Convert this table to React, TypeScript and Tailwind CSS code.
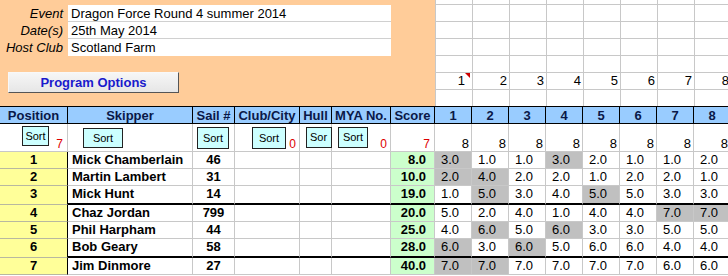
import React from "react";

const GRID = "grid grid-cols-[68px_125px_42px_65px_32px_59px_44px_repeat(8,37px)]";
const RACES = [1, 2, 3, 4, 5, 6, 7, 8];

type Row = {
  pos: number;
  name: string;
  sail: string;
  score: string;
  r: number[];
  gray: number[];
  thick?: boolean;
};

const rows: Row[] = [
  { pos: 1, name: "Mick Chamberlain", sail: "46", score: "8.0", r: [3, 1, 1, 3, 2, 1, 1, 2], gray: [0, 3] },
  { pos: 2, name: "Martin Lambert", sail: "31", score: "10.0", r: [2, 4, 2, 2, 1, 2, 2, 1], gray: [0, 1] },
  { pos: 3, name: "Mick Hunt", sail: "14", score: "19.0", r: [1, 5, 3, 4, 5, 5, 3, 3], gray: [1, 4], thick: true },
  { pos: 4, name: "Chaz Jordan", sail: "799", score: "20.0", r: [5, 2, 4, 1, 4, 4, 7, 7], gray: [6, 7] },
  { pos: 5, name: "Phil Harpham", sail: "44", score: "25.0", r: [4, 6, 5, 6, 3, 3, 5, 5], gray: [1, 3] },
  { pos: 6, name: "Bob Geary", sail: "58", score: "28.0", r: [6, 3, 6, 5, 6, 6, 4, 4], gray: [0, 2], thick: true },
  { pos: 7, name: "Jim Dinmore", sail: "27", score: "40.0", r: [7, 7, 7, 7, 7, 7, 6, 6], gray: [0, 1] },
];

function SortButton({ label = "Sort", className }: { label?: string; className: string }) {
  return (
    <div
      className={`flex items-center justify-center overflow-hidden border border-[#222] bg-[#ccffff] text-[11px] leading-none text-black ${className}`}
    >
      {label}
    </div>
  );
}

function TopInfo() {
  const fields = [
    ["Event", "Dragon Force Round 4 summer 2014"],
    ["Date(s)", "25th May 2014"],
    ["Host Club", "Scotland Farm"],
  ];
  return (
    <div className="w-[435px] shrink-0 bg-[#ffcc99] pt-[5px]">
      {fields.map(([label, value], i) => (
        <div key={label} className="flex h-[17px]">
          <div className="w-[68px] pr-[5px] text-right italic leading-[17px]">{label}</div>
          <div
            className={`w-[323px] bg-white pl-[3px] leading-[17px] ${
              i < 2 ? "border-b border-[#d0d0d0]" : ""
            }`}
          >
            {value}
          </div>
        </div>
      ))}
      <button className="ml-[8px] mt-[16px] flex h-[21px] w-[171px] items-center justify-center border border-t-[#f8f8f8] border-l-[#f8f8f8] border-r-[#555] border-b-[#555] bg-gradient-to-b from-[#f6f6f6] to-[#e6e6e6] text-[13px] font-bold text-[#1a1acc]">
        Program Options
      </button>
    </div>
  );
}

function TopGrid() {
  const heights = ["h-[5px]", "h-[17px]", "h-[17px]", "h-[17px]", "h-[17px]", "h-[17px]", "h-[16px]"];
  return (
    <div className="border-l border-[#c8c8c8]">
      {heights.map((h, ri) => (
        <div key={ri} className={`grid grid-cols-[repeat(8,37px)] ${h}`}>
          {RACES.map((n) => (
            <div
              key={n}
              className={`flex items-center justify-end border-r border-[#c8c8c8] pr-[2px] leading-[16px] ${
                ri < 6 ? "border-b" : ""
              }`}
            >
              {ri === 5 && (
                <>
                  {n}
                  {n === 1 && (
                    <span className="mb-auto h-0 w-0 border-l-[5px] border-t-[5px] border-l-transparent border-t-[#cc0000]" />
                  )}
                </>
              )}
            </div>
          ))}
        </div>
      ))}
    </div>
  );
}

export default function App() {
  const headers = ["Position", "Skipper", "Sail #", "Club/City", "Hull", "MYA No.", "Score"];
  const cell = "border-r border-b border-[#c8c8c8]";
  return (
    <div className="h-[276px] w-[728px] overflow-hidden bg-white font-['Liberation_Sans',Arial,sans-serif] text-[13px] text-black">
      <div className="flex h-[106px]">
        <TopInfo />
        <TopGrid />
      </div>

      {/* Header */}
      <div className={`${GRID} h-[18px]`}>
        {[...headers, ...RACES.map(String)].map((h) => (
          <div
            key={h}
            className="flex items-center justify-center border-t border-b border-r border-black bg-[#99ccff] text-[13px] font-bold leading-none text-[#0a1848]"
          >
            {h}
          </div>
        ))}
      </div>

      {/* Sort row */}
      <div className={`${GRID} h-[28px]`}>
        <div className={`${cell} flex pl-[22px] pt-[2px] pr-[4px]`}>
          <SortButton className="h-[20px] w-[27px]" />
          <span className="ml-auto self-end text-[12px] leading-[14px] text-[#dd0000]">7</span>
        </div>
        <div className={`${cell} pl-[15px] pt-[4px]`}>
          <SortButton className="h-[20px] w-[40px]" />
        </div>
        <div className={`${cell} pl-[4px] pt-[3px]`}>
          <SortButton className="h-[22px] w-[32px]" />
        </div>
        <div className={`${cell} flex pl-[17px] pt-[3px] pr-[3px]`}>
          <SortButton className="h-[22px] w-[34px]" />
          <span className="ml-auto self-end text-[12px] leading-[14px] text-[#dd0000]">0</span>
        </div>
        <div className={`${cell} pl-[6px] pt-[3px]`}>
          <SortButton label="Sor" className="h-[21px] w-[26px] justify-start pl-[3px]" />
        </div>
        <div className={`${cell} flex pl-[6px] pt-[3px] pr-[3px]`}>
          <SortButton className="h-[21px] w-[30px]" />
          <span className="ml-auto self-end text-[12px] leading-[14px] text-[#dd0000]">0</span>
        </div>
        <div className={`${cell} flex items-end justify-end pr-[4px]`}>
          <span className="text-[12px] leading-[14px] text-[#dd0000]">7</span>
        </div>
        {RACES.map((n) => (
          <div key={n} className={`${cell} flex items-end justify-end pr-[2px]`}>
            <span className="leading-[15px]">8</span>
          </div>
        ))}
      </div>

      {/* Results */}
      {rows.map((row) => {
        const rb = row.thick ? "border-b-2 border-b-black" : "border-b border-b-[#c8c8c8]";
        const c = `border-r border-r-[#c8c8c8] ${rb}`;
        return (
          <div key={row.pos} className={`${GRID} ${row.thick ? "h-[19px]" : "h-[17px]"}`}>
            <div className="flex items-start justify-center border-b border-r border-b-[#b8b8a0] border-r-black bg-[#ffff99] font-bold leading-[16px]">
              {row.pos}
            </div>
            <div className={`${c} pl-[4px] font-bold leading-[16px]`}>{row.name}</div>
            <div className={`${c} text-center font-bold leading-[16px]`}>{row.sail}</div>
            <div className={c} />
            <div className={c} />
            <div className={c} />
            <div className={`${c} bg-[#ccffcc] pr-[8px] text-right font-bold leading-[16px]`}>{row.score}</div>
            {row.r.map((v, i) => (
              <div
                key={i}
                className={`${c} pr-[12px] text-right leading-[16px] ${
                  row.gray.includes(i) ? "bg-[#c0c0c0]" : ""
                }`}
              >
                {v.toFixed(1)}
              </div>
            ))}
          </div>
        );
      })}
    </div>
  );
}
